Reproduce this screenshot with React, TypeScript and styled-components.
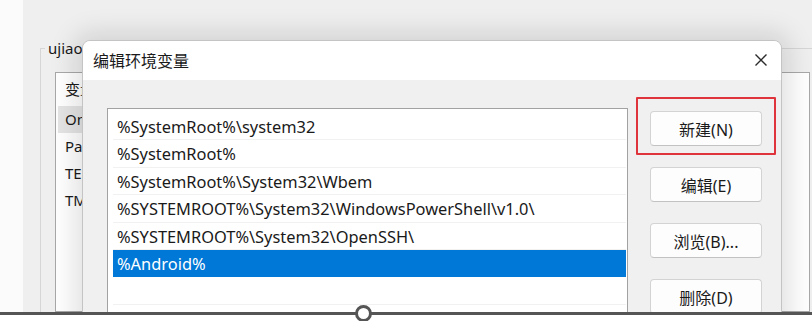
import React from "react";
import styled, { createGlobalStyle } from "styled-components";

const GlobalStyle = createGlobalStyle`
  html, body {
    margin: 0;
    padding: 0;
    background: #fbfbfb;
  }
  body {
    font-family: "Noto Sans", "Noto Sans CJK SC", sans-serif;
    color: #1a1a1a;
  }
  * {
    box-sizing: border-box;
  }
`;

const paths = [
  "%SystemRoot%\\system32",
  "%SystemRoot%",
  "%SystemRoot%\\System32\\Wbem",
  "%SYSTEMROOT%\\System32\\WindowsPowerShell\\v1.0\\",
  "%SYSTEMROOT%\\System32\\OpenSSH\\",
  "%Android%",
  "",
  "",
];

const userVars = ["OneDrive", "Path", "TEMP", "TMP"];

const buttons = [
  { label: "新建(N)", marked: true },
  { label: "编辑(E)", marked: false },
  { label: "浏览(B)...", marked: false },
  { label: "删除(D)", marked: false },
];

const App = () => {
  return (
    <Page>
      <GlobalStyle />
      <Shot>
        <ParentWindow>
          <ParentTitle>
            <span>环境变量</span>
          </ParentTitle>
          <ParentBody>
            <GroupBox>
              <legend>ujiao 的用户变量(U)</legend>
              <ListView>
                <ListHeader>变量</ListHeader>
                {userVars.map((v, i) => (
                  <ListViewRow key={v}>
                    <NameCell active={i === 0}>{v}</NameCell>
                  </ListViewRow>
                ))}
              </ListView>
            </GroupBox>
          </ParentBody>
        </ParentWindow>

        <Dialog>
          <TitleBar>
            <Title>编辑环境变量</Title>
            <CloseButton>
              <svg width="14" height="14" viewBox="0 0 14 14">
                <path
                  d="M1.5 1.5 L12.5 12.5 M12.5 1.5 L1.5 12.5"
                  stroke="#2b2b2b"
                  strokeWidth="1.4"
                  fill="none"
                />
              </svg>
            </CloseButton>
          </TitleBar>
          <DialogBody>
            <PathList>
              {paths.map((p, i) => (
                <PathRow key={i} selected={i === 5}>
                  {p}
                </PathRow>
              ))}
            </PathList>
            <ButtonColumn>
              {buttons.map((b) => (
                <ButtonSlot key={b.label} marked={b.marked}>
                  <Button>{b.label}</Button>
                </ButtonSlot>
              ))}
            </ButtonColumn>
          </DialogBody>
        </Dialog>
      </Shot>
      <Divider>
        <Handle />
      </Divider>
    </Page>
  );
};

const Page = styled.div`
  width: 812px;
  height: 321px;
  overflow: hidden;
  background: #ffffff;
`;

const Shot = styled.div`
  position: relative;
  height: 312px;
  overflow: hidden;
  background: #fbfbfb;
`;

const ParentWindow = styled.div`
  margin-left: 23px;
  width: 820px;
  height: 100%;
  display: flex;
  flex-direction: column;
`;

const ParentTitle = styled.div`
  height: 15px;
  padding-left: 7px;
  overflow: hidden;
  font-family: "Noto Sans CJK SC", sans-serif;
  font-size: 16px;
  color: #8a8a8a;
  span {
    display: block;
    line-height: 16px;
    margin-top: -10px;
  }
`;

const ParentBody = styled.div`
  flex: 1;
  background: #efefef;
  padding: 38px 0 0 17px;
`;

const GroupBox = styled.fieldset`
  margin: 0;
  width: 780px;
  height: 300px;
  border: 1px solid #d6d6d6;
  padding: 14px 14px 0;
  legend {
    margin-left: -10px;
    padding: 0 3px;
    font-size: 15px;
    line-height: 20px;
  }
`;

const ListView = styled.div`
  width: 755px;
  height: 240px;
  background: #ffffff;
  border: 1px solid #a8a8a8;
  padding: 0 2px;
  font-size: 15px;
`;

const ListHeader = styled.div`
  height: 33px;
  line-height: 33px;
  padding-left: 7px;
`;

const ListViewRow = styled.div`
  height: 27px;
  display: flex;
`;

const NameCell = styled.div<{ active: boolean }>`
  width: 180px;
  line-height: 27px;
  padding-left: 7px;
  background: ${({ active }) => (active ? "#e5e5e5" : "transparent")};
`;

const Dialog = styled.div`
  position: absolute;
  left: 82px;
  top: 40px;
  width: 700px;
  height: 320px;
  background: #f0f0f0;
  border: 1px solid #c4c4c4;
  border-radius: 8px 8px 0 0;
  overflow: hidden;
  box-shadow: 0 0 26px 8px rgba(0, 0, 0, 0.12);
`;

const TitleBar = styled.div`
  height: 39px;
  background: #ffffff;
  display: flex;
  align-items: center;
  justify-content: space-between;
  padding: 0 13px 2px 10px;
`;

const Title = styled.div`
  font-family: "Noto Sans CJK SC", sans-serif;
  font-size: 16px;
  color: #1a1a1a;
`;

const CloseButton = styled.div`
  width: 14px;
  height: 14px;
  display: flex;
`;

const DialogBody = styled.div`
  display: flex;
  align-items: flex-start;
  gap: 22px;
  padding: 28px 0 0 24px;
`;

const PathList = styled.div`
  width: 521px;
  height: 260px;
  background: #ffffff;
  border: 1px solid #a2a2a2;
  padding: 4px 1px 0 5px;
`;

const PathRow = styled.div<{ selected: boolean }>`
  height: 27.4px;
  line-height: 27px;
  padding-left: 4px;
  font-family: "Noto Sans", sans-serif;
  font-size: 16.4px;
  white-space: nowrap;
  border-bottom: 1px solid ${({ selected }) => (selected ? "#0078d7" : "#f1f1f1")};
  background: ${({ selected }) => (selected ? "#0078d7" : "transparent")};
  color: ${({ selected }) => (selected ? "#ffffff" : "#1a1a1a")};
`;

const ButtonColumn = styled.div`
  display: flex;
  flex-direction: column;
  gap: 21px;
  padding-top: 3px;
`;

const ButtonSlot = styled.div<{ marked: boolean }>`
  position: relative;
  &::after {
    content: "";
    display: ${({ marked }) => (marked ? "block" : "none")};
    position: absolute;
    top: -14px;
    left: -14px;
    right: -14px;
    bottom: -9px;
    border: 2px solid #e0343c;
    border-radius: 1px;
  }
`;

const Button = styled.div`
  width: 112px;
  height: 35px;
  display: flex;
  align-items: center;
  justify-content: center;
  background: #fdfdfd;
  border: 1px solid #d3d3d3;
  border-bottom-color: #c2c2c2;
  border-radius: 4px;
  font-size: 16px;
  color: #1a1a1a;
`;

const Divider = styled.div`
  position: relative;
  height: 3px;
  background: #555555;
`;

const Handle = styled.div`
  position: absolute;
  left: 355px;
  top: -7px;
  width: 17px;
  height: 17px;
  border-radius: 50%;
  border: 3px solid #555555;
  background: #ffffff;
`;

export default App;
